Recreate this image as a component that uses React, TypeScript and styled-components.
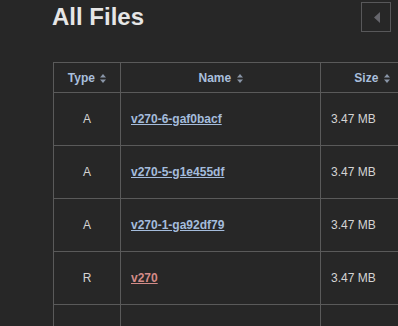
import React from "react";
import styled, { createGlobalStyle } from "styled-components";

interface IFile {
  type: "A" | "R";
  name: string;
  size: string;
}

const FILES: IFile[] = [
  { type: "A", name: "v270-6-gaf0bacf", size: "3.47 MB" },
  { type: "A", name: "v270-5-g1e455df", size: "3.47 MB" },
  { type: "A", name: "v270-1-ga92df79", size: "3.47 MB" },
  { type: "R", name: "v270", size: "3.47 MB" },
  { type: "A", name: "", size: "" },
];

const GlobalStyle = createGlobalStyle`
  html, body {
    margin: 0;
    padding: 0;
    background: #272727;
    overflow: hidden;
  }
  body {
    font-family: "Liberation Sans", Arial, sans-serif;
  }
`;

const SortIcon = () => (
  <SortSvg width="6" height="9" viewBox="0 0 6 9">
    <path d="M3 0 L6 3.5 H0 Z" fill="currentColor" />
    <path d="M3 9 L6 5.5 H0 Z" fill="currentColor" />
  </SortSvg>
);

const App = () => {
  return (
    <Page>
      <GlobalStyle />
      <Header>
        <Title>All Files</Title>
        <CollapseButton>
          <svg width="6" height="11" viewBox="0 0 6 11">
            <path d="M6 0 V11 L0 5.5 Z" fill="#66666c" />
          </svg>
        </CollapseButton>
      </Header>
      <Table>
        <colgroup>
          <col style={{ width: 67 }} />
          <col style={{ width: 200 }} />
          <col style={{ width: 103 }} />
        </colgroup>
        <thead>
          <tr>
            <HeadCell>
              Type <SortIcon />
            </HeadCell>
            <HeadCell>
              Name <SortIcon />
            </HeadCell>
            <HeadCell>
              Size <SortIcon />
            </HeadCell>
          </tr>
        </thead>
        <tbody>
          {FILES.map((file, i) => (
            <tr key={i}>
              <TypeCell>{file.name && file.type}</TypeCell>
              <Cell>
                {file.name && (
                  <FileLink href="#" $removed={file.type === "R"}>
                    {file.name}
                  </FileLink>
                )}
              </Cell>
              <Cell>{file.size}</Cell>
            </tr>
          ))}
        </tbody>
      </Table>
    </Page>
  );
};

const Page = styled.div`
  padding: 0 7px 0 53px;
  width: 398px;
  box-sizing: border-box;
`;

const Header = styled.div`
  display: flex;
  justify-content: space-between;
  align-items: flex-start;
  height: 62px;
`;

const Title = styled.h1`
  margin: 2px 0 0 -1px;
  font-size: 24px;
  line-height: 30px;
  font-weight: 700;
  color: #e6e6e6;
`;

const CollapseButton = styled.div`
  margin-top: 2px;
  width: 30px;
  height: 30px;
  box-sizing: border-box;
  border: 1px solid #58585a;
  display: flex;
  align-items: center;
  justify-content: center;
  padding-left: 1px;
`;

const Table = styled.table`
  border-collapse: collapse;
  table-layout: fixed;
  width: 370px;
  font-size: 12px;
  color: #d4d4d4;
`;

const HeadCell = styled.th`
  height: 30px;
  padding: 0;
  box-sizing: border-box;
  border: 1px solid #5a5a5a;
  font-weight: 700;
  color: #a9bfdc;
  text-align: center;
  white-space: nowrap;
`;

const SortSvg = styled.svg`
  color: #8a96a8;
  margin-left: 2px;
  vertical-align: -1px;
`;

const Cell = styled.td`
  height: 53px;
  padding: 0 0 0 10px;
  box-sizing: border-box;
  border: 1px solid #5a5a5a;
  white-space: nowrap;
`;

const TypeCell = styled(Cell)`
  padding: 0;
  text-align: center;
`;

const FileLink = styled.a<{ $removed?: boolean }>`
  font-weight: 700;
  color: ${(p) => (p.$removed ? "#d38b88" : "#a4bcdc")};
  text-decoration: underline;
`;

export default App;
